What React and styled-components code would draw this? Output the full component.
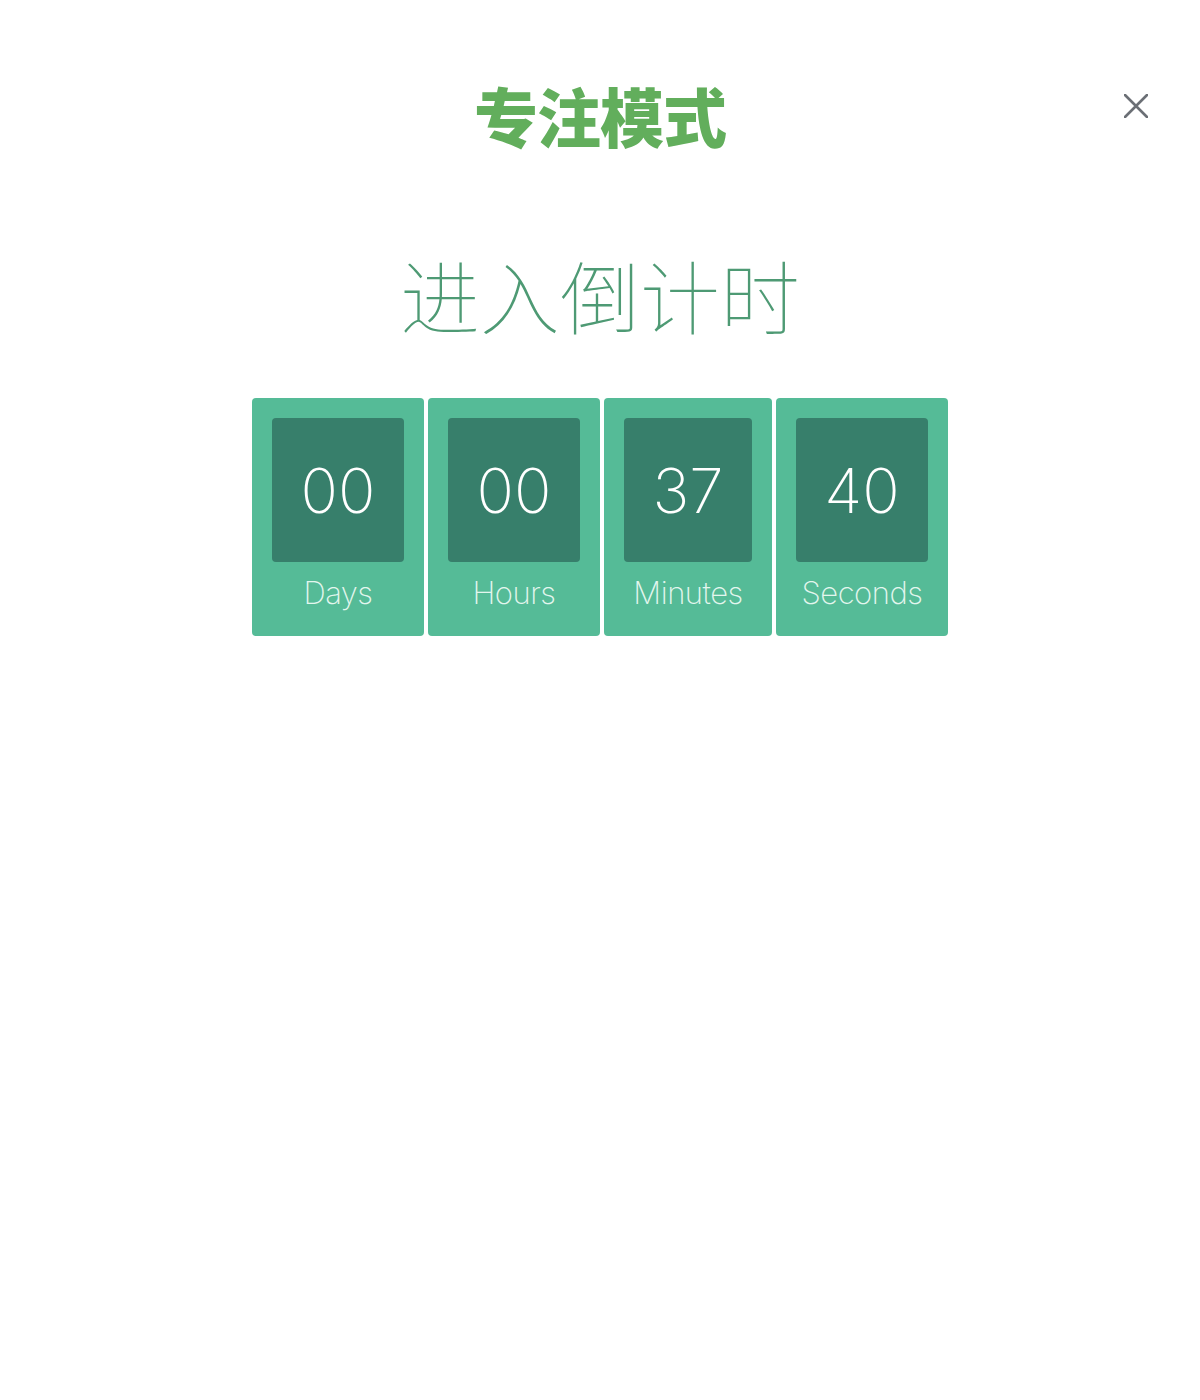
import React from 'react';
import styled, { createGlobalStyle } from 'styled-components';

const GlobalStyle = createGlobalStyle`
  html, body {
    margin: 0;
    padding: 0;
    background: #ffffff;
  }
  body {
    font-family: "Inter", "Noto Sans CJK SC", sans-serif;
  }
`;

const Page = styled.div`
  min-height: 1400px;
  background: #ffffff;
  padding-top: 79px;
  box-sizing: border-box;
`;

const Header = styled.header`
  display: grid;
  grid-template-columns: 1fr auto 1fr;
  align-items: center;
`;

const Title = styled.h1`
  grid-column: 2;
  margin: 0;
  font-family: "Noto Sans CJK SC", sans-serif;
  font-weight: 900;
  font-size: 64px;
  line-height: 70px;
  color: #62ae5c;
  letter-spacing: -1px;
`;

const CloseButton = styled.button`
  justify-self: end;
  align-self: start;
  margin: 15px 52px 0 0;
  width: 24px;
  height: 24px;
  padding: 0;
  border: none;
  background: transparent;
  cursor: pointer;
  display: flex;
`;

const Subtitle = styled.h2`
  margin: 96px 0 0;
  text-align: center;
  font-family: "Noto Sans CJK SC", sans-serif;
  font-weight: 100;
  font-size: 80px;
  line-height: 96px;
  color: #4e9a74;
`;

const Countdown = styled.div`
  display: flex;
  justify-content: center;
  gap: 4px;
  margin-top: 57px;
`;

const Card = styled.div`
  background: #55bb97;
  border-radius: 4px;
  padding: 20px 20px 0;
  height: 238px;
  box-sizing: border-box;
  display: flex;
  flex-direction: column;
  align-items: center;
`;

const Digits = styled.div`
  width: ${(props) => props.width}px;
  height: 144px;
  background: #377f6b;
  border-radius: 4px;
  display: flex;
  align-items: center;
  justify-content: center;
  color: #ffffff;
  font-family: "Inter", sans-serif;
  font-weight: 200;
  font-size: 62px;
  letter-spacing: 0;
`;

const Label = styled.div`
  margin-top: 12px;
  color: #e3f6ee;
  font-family: "Inter", sans-serif;
  font-weight: 200;
  font-size: 31px;
  letter-spacing: -0.5px;
`;

const units = [
  { value: '00', label: 'Days', width: 132 },
  { value: '00', label: 'Hours', width: 132 },
  { value: '37', label: 'Minutes', width: 128 },
  { value: '40', label: 'Seconds', width: 132 },
];

const App = () => {
  return (
    <Page>
      <GlobalStyle />
      <Header>
        <Title>专注模式</Title>
        <CloseButton aria-label="关闭">
          <svg width="24" height="24" viewBox="0 0 24 24">
            <path d="M1 1 L23 23 M23 1 L1 23" stroke="#6b6f75" strokeWidth="2.6" strokeLinecap="round" fill="none" />
          </svg>
        </CloseButton>
      </Header>
      <Subtitle>进入倒计时</Subtitle>
      <Countdown>
        {units.map((u) => (
          <Card key={u.label}>
            <Digits width={u.width}>{u.value}</Digits>
            <Label>{u.label}</Label>
          </Card>
        ))}
      </Countdown>
    </Page>
  );
};

export default App;
